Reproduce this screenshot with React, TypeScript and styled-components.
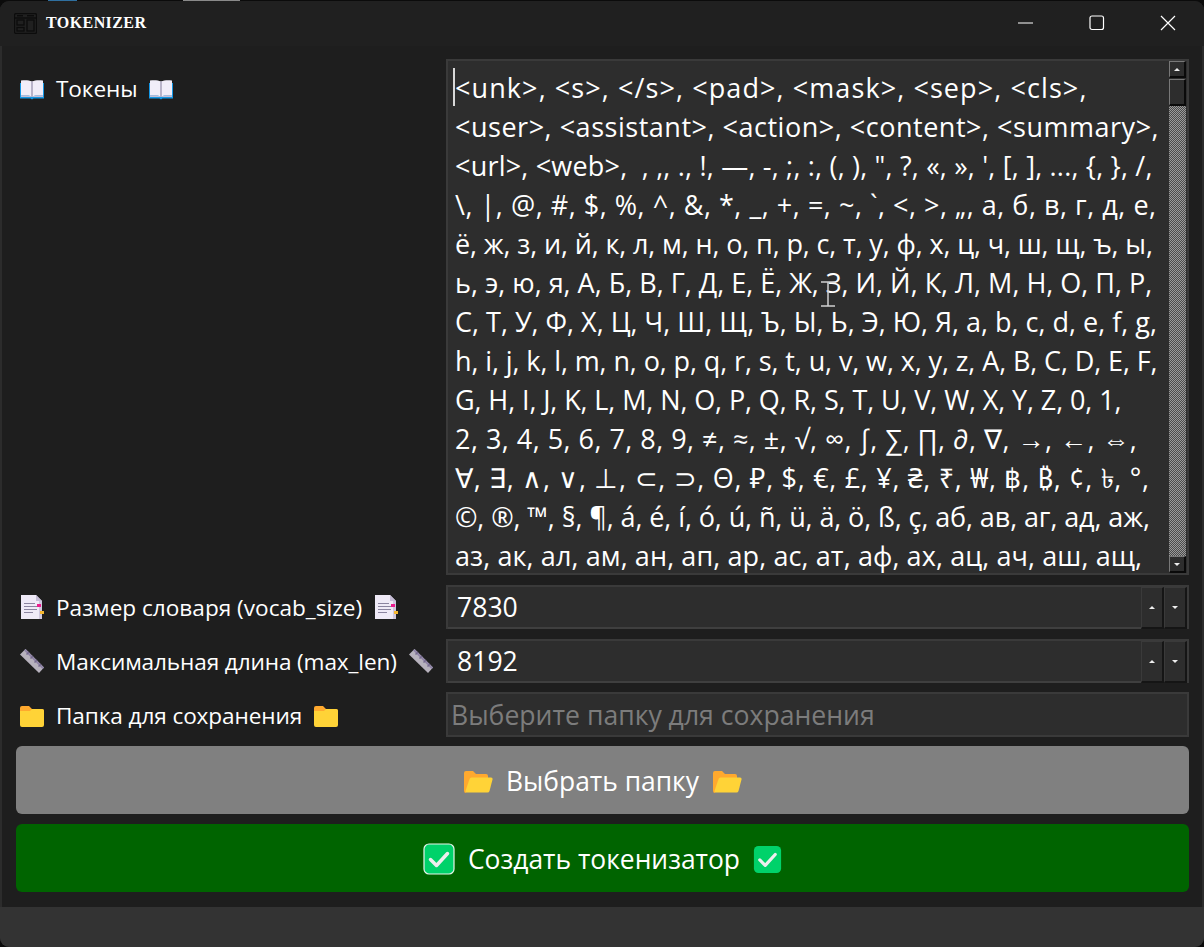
import styled, { createGlobalStyle } from 'styled-components';

const GlobalStyle = createGlobalStyle`
  html, body {
    margin: 0;
    padding: 0;
    background: #0b0b0b;
  }
  body {
    width: 1204px;
    height: 947px;
    overflow: hidden;
    font-family: "Open Sans", "Noto Sans", sans-serif;
  }
`;

// spacing evens out the font's widths so each line ends where it should
const TOKEN_LINES = [
  { text: '<unk>, <s>, </s>, <pad>, <mask>, <sep>, <cls>,', spacing: 1.09 },
  { text: '<user>, <assistant>, <action>, <content>, <summary>,', spacing: 0.52 },
  { text: '<url>, <web>,  , ,, ., !, —, -, ;, :, (, ), ", ?, «, », \', [, ], ..., {, }, /,', spacing: 0.2 },
  { text: '\\, |, @, #, $, %, ^, &, *, _, +, =, ~, `, <, >, „, а, б, в, г, д, е,', spacing: 0.53 },
  { text: 'ё, ж, з, и, й, к, л, м, н, о, п, р, с, т, у, ф, х, ц, ч, ш, щ, ъ, ы,', spacing: -0.13 },
  { text: 'ь, э, ю, я, А, Б, В, Г, Д, Е, Ё, Ж, З, И, Й, К, Л, М, Н, О, П, Р,', spacing: 0 },
  { text: 'С, Т, У, Ф, Х, Ц, Ч, Ш, Щ, Ъ, Ы, Ь, Э, Ю, Я, a, b, c, d, e, f, g,', spacing: 0 },
  { text: 'h, i, j, k, l, m, n, o, p, q, r, s, t, u, v, w, x, y, z, A, B, C, D, E, F,', spacing: -0.1 },
  { text: 'G, H, I, J, K, L, M, N, O, P, Q, R, S, T, U, V, W, X, Y, Z, 0, 1,', spacing: -0.1 },
  { text: '2, 3, 4, 5, 6, 7, 8, 9, ≠, ≈, ±, √, ∞, ∫, ∑, ∏, ∂, ∇, →, ←, ⇔,', spacing: 0.48 },
  { text: '∀, ∃, ∧, ∨, ⊥, ⊂, ⊃, Θ, ₽, $, €, £, ¥, ₴, ₹, ₩, ฿, ₿, ¢, ৳, °,', spacing: 0.7 },
  { text: '©, ®, ™, §, ¶, á, é, í, ó, ú, ñ, ü, ä, ö, ß, ç, аб, ав, аг, ад, аж,', spacing: -0.1 },
  { text: 'аз, ак, ал, ам, ан, ап, ар, ас, ат, аф, ах, ац, ач, аш, ащ,', spacing: 0.1 },
];

// Layout
const Screen = styled.div`
  width: 1204px;
  height: 947px;
  display: flex;
  flex-direction: column;
`;

const DesktopStrip = styled.div`
  height: 1px;
  display: flex;
  flex-shrink: 0;
`;

const DesktopBit = styled.span<{ $left: number; $width: number; $color: string }>`
  margin-left: ${(p) => p.$left}px;
  width: ${(p) => p.$width}px;
  background: ${(p) => p.$color};
`;

const Window = styled.div`
  flex: 1;
  display: flex;
  flex-direction: column;
  background: #202020;
  border-radius: 9px;
  overflow: hidden;
`;

const TitleBar = styled.div`
  height: 45px;
  flex-shrink: 0;
  display: flex;
  align-items: center;
  padding-left: 14px;
  background: #202020;
`;

const AppIcon = styled.svg`
  width: 23px;
  height: 21px;
  margin-right: 9px;
`;

const Title = styled.div`
  font-family: "Liberation Serif", serif;
  font-weight: 700;
  font-size: 16px;
  letter-spacing: 0.42px;
  color: #fff;
  margin-top: -1px;
`;

const WindowControls = styled.div`
  margin-left: auto;
  margin-right: 1px;
  padding-bottom: 2px;
  display: flex;
  height: 100%;
  box-sizing: border-box;
`;

const WindowControl = styled.div`
  width: 71px;
  display: flex;
  align-items: center;
  justify-content: center;
`;

const Content = styled.div`
  height: 861px;
  flex-shrink: 0;
  box-sizing: border-box;
  display: flex;
  flex-direction: column;
  padding: 13px 13px 14px 14px;
  background: #1e1e1e;
  border-left: 2px solid #2c2c2c;
  border-right: 2px solid #2c2c2c;
`;

const Row = styled.div<{ $height: number; $top?: number; $start?: boolean }>`
  display: flex;
  align-items: ${(p) => (p.$start ? 'flex-start' : 'center')};
  height: ${(p) => p.$height}px;
  margin-top: ${(p) => p.$top ?? 0}px;
  flex-shrink: 0;
`;

const Label = styled.div<{ $top?: number; $spacing?: number }>`
  width: 430px;
  flex-shrink: 0;
  box-sizing: border-box;
  display: flex;
  align-items: center;
  gap: 11px;
  padding: ${(p) => p.$top ?? 0}px 0 0 3px;
  font-size: 22.6px;
  letter-spacing: ${(p) => p.$spacing ?? 0}px;
  color: #fff;
  white-space: pre;
`;

const EmojiSvg = styled.svg<{ $size?: number }>`
  width: ${(p) => p.$size ?? 26}px;
  height: ${(p) => p.$size ?? 26}px;
  flex-shrink: 0;
`;

// Text area
const TextArea = styled.div`
  position: relative;
  flex: 1;
  height: 100%;
  box-sizing: border-box;
  display: flex;
  background: #2d2d2d;
  border: 2px solid #3a3a3a;
  overflow: hidden;
`;

const TextLines = styled.div`
  flex: 1;
  padding: 7px 0 0 7px;
  font-size: 27px;
  line-height: 39px;
  color: #fff;
  white-space: pre;
  overflow: hidden;
`;

const TokenLine = styled.div<{ $spacing: number }>`
  letter-spacing: ${(p) => p.$spacing}px;
`;

const Caret = styled.div`
  position: absolute;
  left: 5px;
  top: 7px;
  width: 2px;
  height: 38px;
  background: #d8d8d8;
`;

const IBeam = styled.svg`
  position: absolute;
  left: 372px;
  top: 220px;
  width: 16px;
  height: 26px;
`;

const ScrollBar = styled.div`
  width: 17px;
  margin-right: 1px;
  flex-shrink: 0;
  display: flex;
  flex-direction: column;
`;

const BevelButton = styled.div<{ $raised?: boolean }>`
  box-sizing: border-box;
  display: flex;
  align-items: center;
  justify-content: center;
  background: #2d2d2d;
  border-style: solid;
  border-width: 1px 2px 2px 1px;
  border-color: ${(p) => (p.$raised ? '#787878 #0a0a0a #0a0a0a #787878' : '#3a3a3a #151515 #151515 #3a3a3a')};
`;

const ScrollStep = styled(BevelButton)`
  height: 17px;
  flex-shrink: 0;
`;

const ScrollThumb = styled(BevelButton)`
  height: 27px;
  margin-top: 1px;
  flex-shrink: 0;
`;

const ScrollTrack = styled.div`
  flex: 1;
  background: repeating-conic-gradient(#9a9a9a 0 25%, #4c4c4c 0 50%) 0 0 / 2px 2px;
`;

const Arrow = styled.span<{ $down?: boolean }>`
  width: 0;
  height: 0;
  border-left: 3px solid transparent;
  border-right: 3px solid transparent;
  ${(p) => (p.$down ? 'border-top: 3px solid #eee;' : 'border-bottom: 3px solid #eee;')}
`;

// Inputs
const SpinBox = styled.div`
  flex: 1;
  height: 100%;
  box-sizing: border-box;
  position: relative;
  display: flex;
  background: #2d2d2d;
  border: 2px solid #3a3a3a;
  border-bottom: none;
`;

const SpinValue = styled.div`
  flex: 1;
  box-sizing: border-box;
  padding: 0 0 0 9px;
  display: flex;
  align-items: center;
  font-size: 26.6px;
  color: #fff;
  border-bottom: 2px solid #3f3f3f;
`;

const SpinStep = styled(BevelButton)`
  width: 23px;
  border-width: 1px 2px 2px 1px;
`;

const FolderInput = styled.div`
  flex: 1;
  height: 100%;
  box-sizing: border-box;
  display: flex;
  align-items: center;
  padding: 1px 0 0 3px;
  background: #2d2d2d;
  border: 2px solid #3a3a3a;
  font-size: 26.6px;
  color: #7c7c7c;
`;

// Buttons
const ActionButton = styled.button<{ $bg: string; $top: number }>`
  height: 68px;
  flex-shrink: 0;
  margin-top: ${(p) => p.$top}px;
  border: none;
  border-radius: 6px;
  background: ${(p) => p.$bg};
  color: #fff;
  font-family: inherit;
  font-size: 26.4px;
  display: flex;
  align-items: center;
  justify-content: center;
  gap: 13px;
  padding: 2px 0 0;
`;

const Footer = styled.div`
  flex: 1;
  background: #333333;
`;

// Icons
const BookIcon = () => (
  <EmojiSvg viewBox="0 0 26 26">
    <path d="M1 7h24v15.500H14.500l-1.500 1-1.500-1H1z" fill="#1497e6" />
    <path d="M2 4.500c4-.6 8-.4 11 1v15c-3-1.200-7-1.400-11-1z" fill="#f1edf9" />
    <path d="M24 4.500c-4-.6-8-.4-11 1v15c3-1.200 7-1.400 11-1z" fill="#f1edf9" />
    <path d="M12.200 5.500h1.600v15h-1.600z" fill="#aba4bd" />
    <path d="M2 19.500c4-.4 8-.2 11 1 3-1.200 7-1.400 11-1v1.500H2z" fill="#c6bfd6" />
  </EmojiSvg>
);

const PageIcon = () => (
  <EmojiSvg viewBox="0 0 26 26">
    <path d="M2 1h15l6 6v18H2z" fill="#efeaf7" />
    <path d="M17 1l6 6h-6z" fill="#c5bcd6" />
    <path d="M20 7h3v18h-3z" fill="#cfc7de" />
    <path d="M5 9h11v1H5zM5 12h13v1H5zM5 15h13v1H5zM5 18h9v1H5z" fill="#8b84a0" />
    <path d="M18 10h4v3h-4z" fill="#ec1c8e" />
    <path d="M21 17h4v3h-4z" fill="#f5b731" />
  </EmojiSvg>
);

const RulerIcon = () => (
  <EmojiSvg viewBox="0 0 26 26">
    <path d="M6.500 1L25 19.500 20 25 1 6.500z" fill="#b7b2bd" />
    <path d="M6.500 1L25 19.500l-1.500 1.500L5 2.500z" fill="#8f84a6" />
    <path d="M7 6l2.500-2.500 1 1L8 7zM11 10l2.500-2.500 1 1L12 11zM15 14l2.500-2.500 1 1L16 15zM19 18l2.500-2.500 1 1L20 19z" fill="#756a8d" />
  </EmojiSvg>
);

const FolderIcon = () => (
  <EmojiSvg viewBox="0 0 26 26">
    <path d="M1 5q0-2 2-2h7l3 3h10q2 0 2 2v4H1z" fill="#ffa92e" />
    <path d="M1 8h10l2-2h10q2 0 2 2v14q0 2-2 2H3q-2 0-2-2z" fill="#ffd337" />
    <path d="M1 6h8l2 2H1z" fill="#ffa92e" />
  </EmojiSvg>
);

const OpenFolderIcon = () => (
  <EmojiSvg viewBox="0 0 30 26" $size={30}>
    <path d="M1 5q0-2 2-2h7l3 3h10q2 0 2 2v3H7l-4 14H3q-2 0-2-2z" fill="#ffa92e" />
    <path d="M6.500 11q.5-1.500 2-1.500H28q2 0 1.500 2l-3 11.500q-.5 1.500-2 1.500H3.500q-1.500 0-1-1.500z" fill="#ffd337" />
  </EmojiSvg>
);

const CheckIcon = ({ outlined }: { outlined?: boolean }) => (
  <EmojiSvg viewBox="0 0 32 32" $size={outlined ? 32 : 29}>
    <rect
      x="1"
      y="1"
      width="30"
      height="30"
      rx="5"
      fill="#00d26a"
      stroke={outlined ? '#e8f3ea' : 'none'}
      strokeWidth={outlined ? 1.2 : 0}
    />
    <path d="M7.500 16.500l6 6L24.500 10.500" fill="none" stroke="#eeeeee" strokeWidth="3.500" strokeLinecap="round" strokeLinejoin="round" />
  </EmojiSvg>
);

const App = () => (
  <>
    <GlobalStyle />
    <Screen>
      <DesktopStrip>
        <DesktopBit $left={48} $width={29} $color="#2f6f9f" />
        <DesktopBit $left={106} $width={57} $color="#8a8a8a" />
      </DesktopStrip>
      <Window>
        <TitleBar>
          <AppIcon viewBox="0 0 23 21" fill="none" stroke="#0c0c0c" strokeWidth="1.300">
            <rect x="0.500" y="0.500" width="22" height="20" rx="1.500" />
            <path d="M0.500 5h22" />
            <path d="M3 2.800h6M13 2.800h7" strokeWidth="1.600" />
            <rect x="3" y="7" width="7" height="5" />
            <rect x="3" y="14.500" width="7" height="3.500" />
            <rect x="13" y="7" width="7" height="11" />
          </AppIcon>
          <Title>TOKENIZER</Title>
          <WindowControls>
            <WindowControl>
              <svg width="16" height="2" viewBox="0 0 16 2"><path d="M0 1h15" stroke="#fff" strokeWidth="1" /></svg>
            </WindowControl>
            <WindowControl>
              <svg width="16" height="16" viewBox="0 0 16 16" fill="none"><rect x="1" y="1" width="13.500" height="13.500" rx="2" stroke="#fff" strokeWidth="1.200" /></svg>
            </WindowControl>
            <WindowControl>
              <svg width="16" height="16" viewBox="0 0 16 16" fill="none"><path d="M1 1l14 14M15 1L1 15" stroke="#fff" strokeWidth="1.200" /></svg>
            </WindowControl>
          </WindowControls>
        </TitleBar>
        <Content>
          <Row $height={516} $start>
            <Label $top={14} $spacing={-0.1}><BookIcon />Токены<BookIcon /></Label>
            <TextArea>
              <TextLines>
                {TOKEN_LINES.map((line) => (
                  <TokenLine key={line.text} $spacing={line.spacing}>{line.text}</TokenLine>
                ))}
              </TextLines>
              <Caret />
              <ScrollBar>
                <ScrollStep $raised><Arrow /></ScrollStep>
                <ScrollThumb $raised />
                <ScrollTrack />
                <ScrollStep $raised><Arrow $down /></ScrollStep>
              </ScrollBar>
              <IBeam viewBox="0 0 16 26" fill="none" stroke="#d0d0d0" strokeWidth="1.500">
                <path d="M1 1h14M8 1v24M1 25h14" />
              </IBeam>
            </TextArea>
          </Row>
          <Row $height={44} $top={10}>
            <Label><PageIcon />Размер словаря (vocab_size)<PageIcon /></Label>
            <SpinBox>
              <SpinValue>7830</SpinValue>
              <SpinStep><Arrow /></SpinStep>
              <SpinStep><Arrow $down /></SpinStep>
            </SpinBox>
          </Row>
          <Row $height={44} $top={10}>
            <Label $spacing={-0.12}><RulerIcon />Максимальная длина (max_len)<RulerIcon /></Label>
            <SpinBox>
              <SpinValue>8192</SpinValue>
              <SpinStep><Arrow /></SpinStep>
              <SpinStep><Arrow $down /></SpinStep>
            </SpinBox>
          </Row>
          <Row $height={45} $top={9}>
            <Label $top={2} $spacing={-0.1}><FolderIcon />Папка для сохранения<FolderIcon /></Label>
            <FolderInput>Выберите папку для сохранения</FolderInput>
          </Row>
          <ActionButton $bg="#808080" $top={9}>
            <OpenFolderIcon />Выбрать папку<OpenFolderIcon />
          </ActionButton>
          <ActionButton $bg="#006400" $top={10}>
            <CheckIcon outlined />Создать токенизатор<CheckIcon />
          </ActionButton>
        </Content>
        <Footer />
      </Window>
    </Screen>
  </>
);

export default App;
